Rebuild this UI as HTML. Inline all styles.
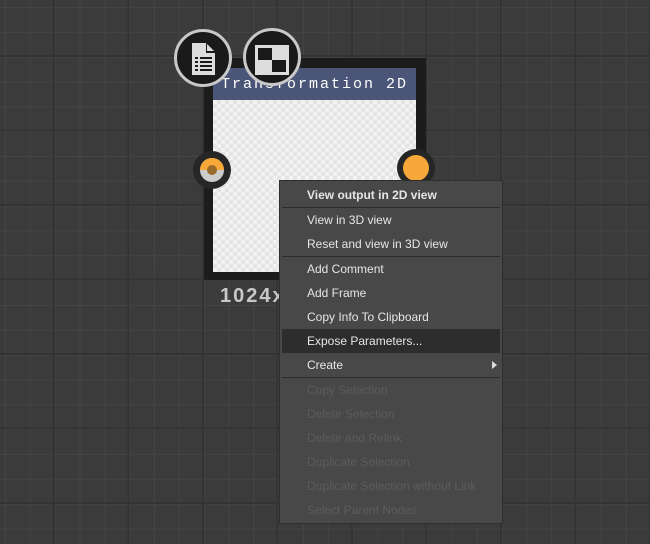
<!DOCTYPE html>
<html><head><style>
body{margin:0;width:650px;height:544px;overflow:hidden;background:#3b3b3b;position:relative;font-family:"Liberation Sans",sans-serif;
background-image:
linear-gradient(90deg,#333 2px,transparent 2px),
linear-gradient(0deg,#333 2px,transparent 2px),
linear-gradient(90deg,#444 1px,transparent 1px),
linear-gradient(0deg,#444 1px,transparent 1px);
background-size:74.5px 74.5px,74.5px 74.5px,24.83px 24.83px,24.83px 24.83px;
background-position:53px 0,0 57px,5px 0,0 8px;}
.a{position:absolute}
.frame{left:204px;top:58px;width:222px;height:222px;background:#1c1c1c}
.head{left:213px;top:68px;width:203px;height:32px;background:#4a5577;color:#fff;font-size:15px;letter-spacing:2px;line-height:34px;text-align:center;font-family:"Liberation Mono",monospace}
.chk{left:213px;top:100px;width:203px;height:172px;background-color:#f2f2f2;
background-image:linear-gradient(45deg,#e4e4e4 25%,transparent 25%,transparent 75%,#e4e4e4 75%),linear-gradient(45deg,#e4e4e4 25%,transparent 25%,transparent 75%,#e4e4e4 75%);background-size:8px 8px;background-position:0 0,4px 4px}
.ic{width:52px;height:52px;border-radius:50%;background:#1a1a1a;border:3px solid #c8c8c8}
.port{width:38px;height:38px;border-radius:50%;background:#262626}
.menu{left:279px;top:180px;width:222px;height:342px;background:#484848;border:1px solid #2e2e2e;font-size:12px;color:#e6e6e6}
.it{height:24px;line-height:24px;padding-left:27px}
.sep{height:1px;background:#2c2c2c;margin:0 2px}
.dis{color:#5c5c5c}
.hl{background:#2d2d2d;margin:0 2px;padding-left:25px}
</style></head><body>
<div class="a frame"></div>
<div class="a chk"></div>
<div class="a head">Transformation 2D</div>
<div class="a ic" style="left:174px;top:29px"><svg width="52" height="52"><path d="M15 11h14l9 9v23H15z" fill="#ddd"/><path d="M29 11v9h9z" fill="#1a1a1a"/><path d="M30 12v7h7" fill="#ddd"/><path d="M29 20h9" stroke="#1a1a1a" stroke-width="2"/><path d="M23 26h12M23 30h12M23 34h12M23 38h12M18 26h3M18 30h3M18 34h3M18 38h3" stroke="#1a1a1a" stroke-width="2"/></svg></div>
<div class="a ic" style="left:243px;top:28px"><svg width="52" height="52"><rect x="9" y="14" width="34" height="30" fill="#ddd"/><rect x="12" y="17" width="14" height="12" fill="#1a1a1a"/><rect x="26" y="29" width="14" height="12" fill="#1a1a1a"/></svg></div>
<div class="a port" style="left:193px;top:151px"><svg width="38" height="38"><circle cx="19" cy="19" r="12" fill="#ccc"/><path d="M7 19a12 12 0 0 1 24 0z" fill="#f7a838"/><circle cx="19" cy="19" r="5" fill="#9a6a2a"/></svg></div>
<div class="a port" style="left:397px;top:149px"><svg width="38" height="38"><circle cx="19" cy="19" r="13" fill="#f7a838"/></svg></div>
<div class="a" style="left:220px;top:285px;color:#c8c8c8;font-size:20px;font-weight:bold;letter-spacing:2px">1024x</div>
<div class="a menu">
<div class="it" style="font-weight:bold;margin-top:2px">View output in 2D view</div>
<div class="sep"></div>
<div class="it">View in 3D view</div>
<div class="it">Reset and view in 3D view</div>
<div class="sep"></div>
<div class="it">Add Comment</div>
<div class="it">Add Frame</div>
<div class="it">Copy Info To Clipboard</div>
<div class="it hl">Expose Parameters...</div>
<div class="it" style="position:relative">Create<span style="position:absolute;right:5px;top:8px;border-left:5px solid #ddd;border-top:4px solid transparent;border-bottom:4px solid transparent"></span></div>
<div class="sep"></div>
<div class="it dis">Copy Selection</div>
<div class="it dis">Delete Selection</div>
<div class="it dis">Delete and Relink</div>
<div class="it dis">Duplicate Selection</div>
<div class="it dis">Duplicate Selection without Link</div>
<div class="it dis">Select Parent Nodes</div>
</div>
</body></html>
